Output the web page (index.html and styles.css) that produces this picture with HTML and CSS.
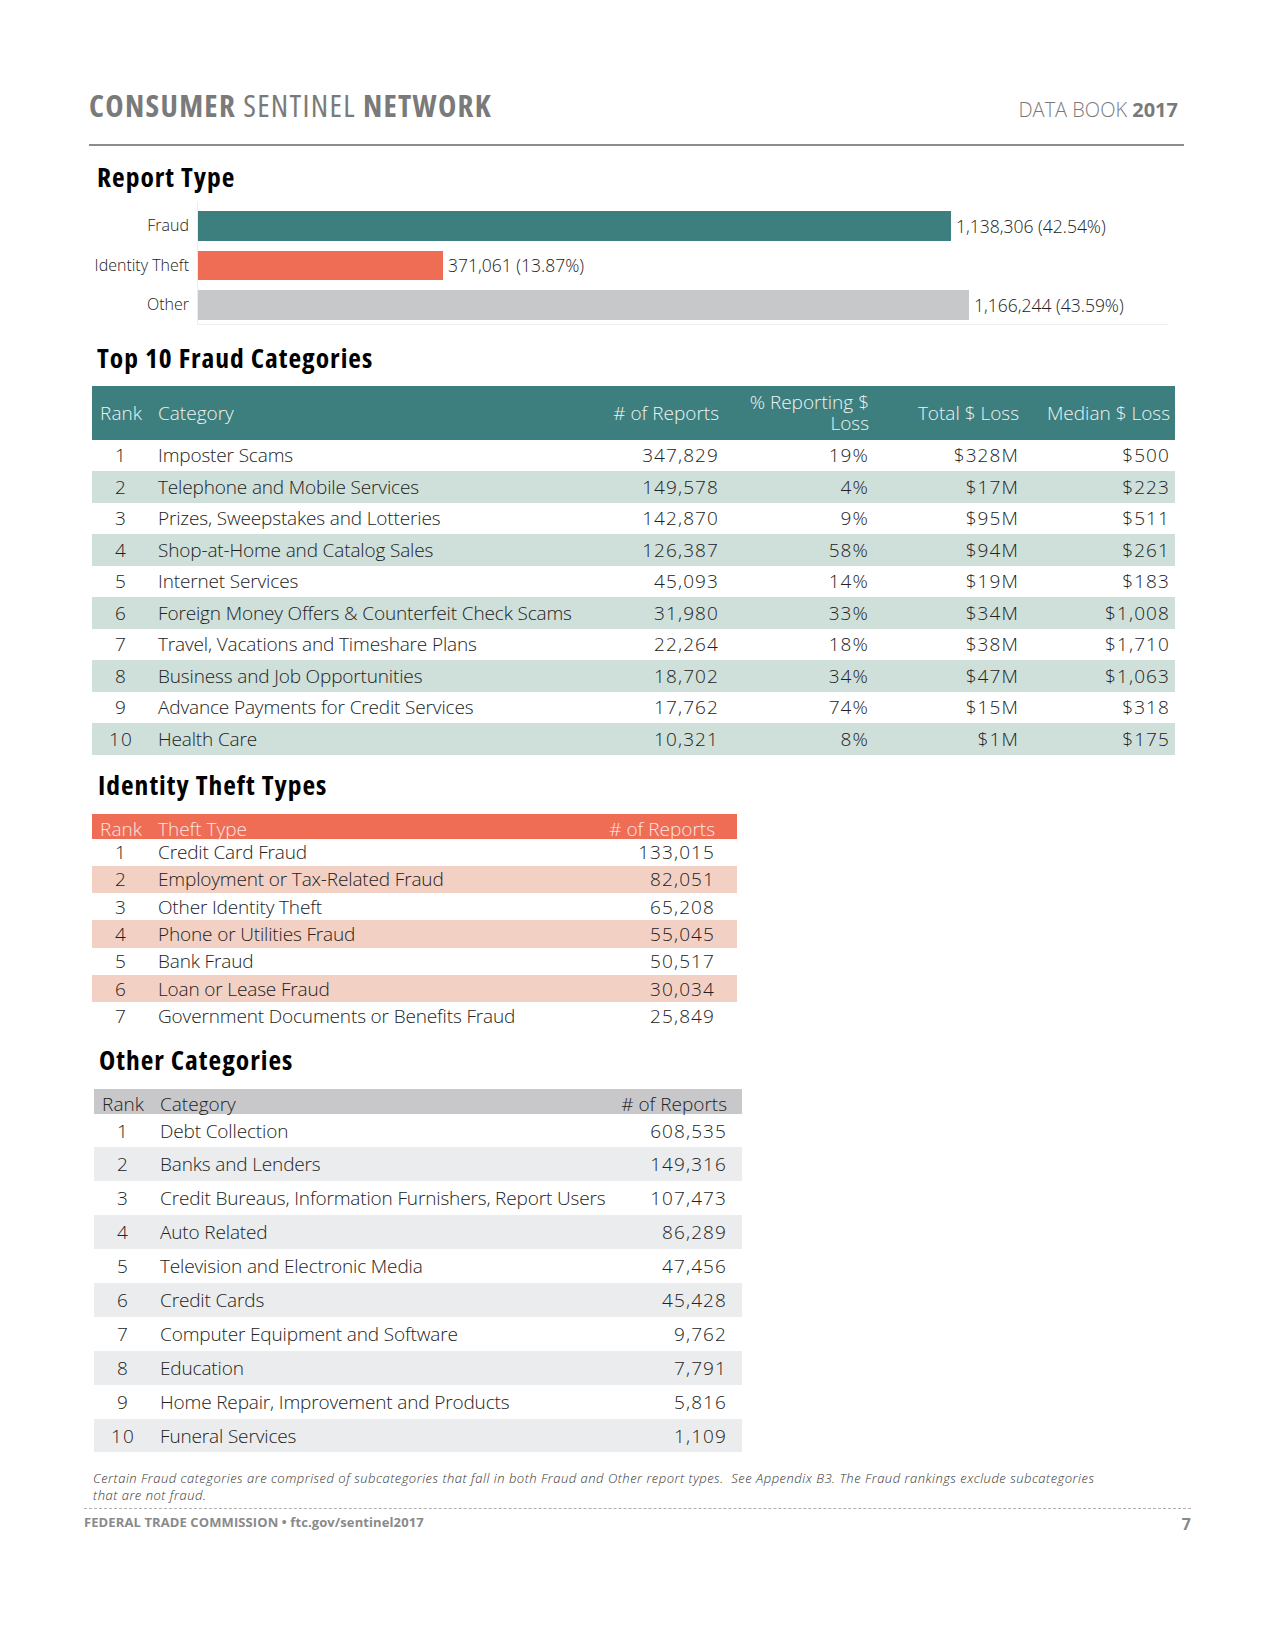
FILE: index.html
```html
<!DOCTYPE html>
<html>
<head>
<meta charset="utf-8">
<link rel="stylesheet" href="styles.css">
</head>
<body>
<div class="page">
  <header class="masthead">
    <div class="brand"><b>CONSUMER</b> SENTINEL <b>NETWORK</b></div>
    <div class="book">DATA BOOK <b>2017</b></div>
  </header>

  <section class="report-type">
    <h2 class="title t-report">Report Type</h2>
    <div class="chart">
      <div class="chart-labels">
        <div class="clabel">Fraud</div>
        <div class="clabel">Identity Theft</div>
        <div class="clabel">Other</div>
      </div>
      <div class="chart-plot">
        <div class="bar-row"><div class="bar bar-fraud" style="width:753px"></div><span class="bval">1,138,306 (42.54%)</span></div>
        <div class="bar-row"><div class="bar bar-id" style="width:245px"></div><span class="bval">371,061 (13.87%)</span></div>
        <div class="bar-row"><div class="bar bar-other" style="width:771px"></div><span class="bval">1,166,244 (43.59%)</span></div>
      </div>
    </div>
  </section>

  <h2 class="title t-fraud">Top 10 Fraud Categories</h2>
  <table class="tbl fraud">
    <colgroup><col class="c-rank"><col class="c-cat"><col class="c-num"><col class="c-num"><col class="c-num"><col class="c-last"></colgroup>
    <thead>
      <tr><th class="rank">Rank</th><th class="cat">Category</th><th class="num"># of Reports</th><th class="num"><span class="hl">% Reporting $</span><span class="hl">Loss</span></th><th class="num">Total $ Loss</th><th class="num">Median $ Loss</th></tr>
    </thead>
    <tbody>
      <tr><td class="rank">1</td><td class="cat">Imposter Scams</td><td class="num">347,829</td><td class="num">19%</td><td class="num">$328M</td><td class="num">$500</td></tr>
      <tr><td class="rank">2</td><td class="cat">Telephone and Mobile Services</td><td class="num">149,578</td><td class="num">4%</td><td class="num">$17M</td><td class="num">$223</td></tr>
      <tr><td class="rank">3</td><td class="cat">Prizes, Sweepstakes and Lotteries</td><td class="num">142,870</td><td class="num">9%</td><td class="num">$95M</td><td class="num">$511</td></tr>
      <tr><td class="rank">4</td><td class="cat">Shop-at-Home and Catalog Sales</td><td class="num">126,387</td><td class="num">58%</td><td class="num">$94M</td><td class="num">$261</td></tr>
      <tr><td class="rank">5</td><td class="cat">Internet Services</td><td class="num">45,093</td><td class="num">14%</td><td class="num">$19M</td><td class="num">$183</td></tr>
      <tr><td class="rank">6</td><td class="cat">Foreign Money Offers &amp; Counterfeit Check Scams</td><td class="num">31,980</td><td class="num">33%</td><td class="num">$34M</td><td class="num">$1,008</td></tr>
      <tr><td class="rank">7</td><td class="cat">Travel, Vacations and Timeshare Plans</td><td class="num">22,264</td><td class="num">18%</td><td class="num">$38M</td><td class="num">$1,710</td></tr>
      <tr><td class="rank">8</td><td class="cat">Business and Job Opportunities</td><td class="num">18,702</td><td class="num">34%</td><td class="num">$47M</td><td class="num">$1,063</td></tr>
      <tr><td class="rank">9</td><td class="cat">Advance Payments for Credit Services</td><td class="num">17,762</td><td class="num">74%</td><td class="num">$15M</td><td class="num">$318</td></tr>
      <tr><td class="rank">10</td><td class="cat">Health Care</td><td class="num">10,321</td><td class="num">8%</td><td class="num">$1M</td><td class="num">$175</td></tr>
    </tbody>
  </table>

  <h2 class="title t-id">Identity Theft Types</h2>
  <table class="tbl idt">
    <colgroup><col class="c-rank"><col class="c-cat"><col class="c-num"></colgroup>
    <thead>
      <tr><th class="rank">Rank</th><th class="cat">Theft Type</th><th class="num"># of Reports</th></tr>
    </thead>
    <tbody>
      <tr><td class="rank">1</td><td class="cat">Credit Card Fraud</td><td class="num">133,015</td></tr>
      <tr><td class="rank">2</td><td class="cat">Employment or Tax-Related Fraud</td><td class="num">82,051</td></tr>
      <tr><td class="rank">3</td><td class="cat">Other Identity Theft</td><td class="num">65,208</td></tr>
      <tr><td class="rank">4</td><td class="cat">Phone or Utilities Fraud</td><td class="num">55,045</td></tr>
      <tr><td class="rank">5</td><td class="cat">Bank Fraud</td><td class="num">50,517</td></tr>
      <tr><td class="rank">6</td><td class="cat">Loan or Lease Fraud</td><td class="num">30,034</td></tr>
      <tr><td class="rank">7</td><td class="cat">Government Documents or Benefits Fraud</td><td class="num">25,849</td></tr>
    </tbody>
  </table>

  <h2 class="title t-other">Other Categories</h2>
  <table class="tbl oth">
    <colgroup><col class="c-rank"><col class="c-cat"><col class="c-num"></colgroup>
    <thead>
      <tr><th class="rank">Rank</th><th class="cat">Category</th><th class="num"># of Reports</th></tr>
    </thead>
    <tbody>
      <tr><td class="rank">1</td><td class="cat">Debt Collection</td><td class="num">608,535</td></tr>
      <tr><td class="rank">2</td><td class="cat">Banks and Lenders</td><td class="num">149,316</td></tr>
      <tr><td class="rank">3</td><td class="cat">Credit Bureaus, Information Furnishers, Report Users</td><td class="num">107,473</td></tr>
      <tr><td class="rank">4</td><td class="cat">Auto Related</td><td class="num">86,289</td></tr>
      <tr><td class="rank">5</td><td class="cat">Television and Electronic Media</td><td class="num">47,456</td></tr>
      <tr><td class="rank">6</td><td class="cat">Credit Cards</td><td class="num">45,428</td></tr>
      <tr><td class="rank">7</td><td class="cat">Computer Equipment and Software</td><td class="num">9,762</td></tr>
      <tr><td class="rank">8</td><td class="cat">Education</td><td class="num">7,791</td></tr>
      <tr><td class="rank">9</td><td class="cat">Home Repair, Improvement and Products</td><td class="num">5,816</td></tr>
      <tr><td class="rank">10</td><td class="cat">Funeral Services</td><td class="num">1,109</td></tr>
    </tbody>
  </table>

  <p class="note">Certain Fraud categories are comprised of subcategories that fall in both Fraud and Other report types.&nbsp; See Appendix B3. The Fraud rankings exclude subcategories that are not fraud.</p>

  <footer class="foot">
    <span>FEDERAL TRADE COMMISSION • ftc.gov/sentinel2017</span>
    <span class="pno">7</span>
  </footer>
</div>
</body>
</html>
```

FILE: styles.css
```css
* { box-sizing: border-box; }
html, body { margin: 0; padding: 0; background: #fff; }
body {
  font-family: "Open Sans", "DejaVu Sans Condensed", sans-serif;
  font-stretch: 100%;
  font-weight: 300;
  color: #222;
}
.page {
  width: 1275px;
  padding: 86px 0 0 0;
}

/* masthead */
.masthead {
  margin: 0 91px 0 89px;
  display: flex;
  justify-content: space-between;
  align-items: baseline;
  border-bottom: 2px solid #8c8c8c;
  padding-bottom: 20px;
  color: #7a7a7a;
}
.brand { font-size: 31px; line-height: 38px; font-weight: 400; font-stretch: 75%; letter-spacing: 1.3px; }
.brand b { font-weight: 700; }
.book { font-size: 20px; margin-right: 6px; font-weight: 300; letter-spacing: 0; }
.book b { font-weight: 700; }

.title {
  font-weight: 700;
  font-size: 27.5px;
  font-stretch: 75%;
  letter-spacing: 1px;
  color: #000;
  margin: 0;
  line-height: 30px;
}
.t-report { margin: 16px 0 0 97px; }
.t-fraud { margin: 18px 0 0 97px; }
.t-id { margin: 15px 0 0 98px; }
.t-other { margin: 15px 0 0 99px; }

/* chart */
.chart {
  display: flex;
  margin: 10px 0 0 0;
}
.chart-labels {
  width: 197px;
  padding: 9px 8px 0 0;
  display: flex;
  flex-direction: column;
  gap: 10px;
}
.clabel {
  height: 29.5px;
  line-height: 29.5px;
  text-align: right;
  font-size: 16px;
  letter-spacing: 0;
  color: #222;
}
.chart-plot {
  width: 971px;
  border-left: 1px solid #eeeeee;
  border-bottom: 1px solid #eeeeee;
  padding: 9px 0 4px 0;
  display: flex;
  flex-direction: column;
  gap: 10px;
}
.bar-row {
  display: flex;
  align-items: center;
  height: 29.5px;
}
.bar { height: 100%; flex: none; }
.bar-fraud { background: #3d7f7e; }
.bar-id { background: #ef6c55; }
.bar-other { background: #c7c8ca; }
.bval { font-size: 17.5px; letter-spacing: 0; margin-left: 5px; color: #222; white-space: nowrap; }

/* tables */
.tbl {
  border-collapse: collapse;
  table-layout: fixed;
  font-size: 19px;
  color: #222;
  letter-spacing: -0.15px;
}
.tbl th { font-weight: 300; letter-spacing: 0; }
.tbl td, .tbl th { padding: 0; white-space: nowrap; }
.tbl .rank { text-align: center; }
.tbl .cat { text-align: left; padding-left: 8px; }
.tbl .num { text-align: right; }
.tbl td.num, .tbl td.rank { letter-spacing: 1.1px; }
.hl { display: block; line-height: 21px; }

.fraud { margin: 13px 0 0 92px; width: 1083px; }
.fraud .c-rank { width: 58px; }
.fraud .c-cat { width: 424px; }
.fraud .c-num { width: 150px; }
.fraud .c-last { width: 151px; }
.fraud thead tr { background: #3d7f7e; height: 54px; }
.fraud th { color: #eef4f3; line-height: 22px; vertical-align: middle; }
.fraud .num { padding-right: 5px; }
.fraud tbody tr { height: 31.5px; }
.fraud tbody tr:nth-child(even) { background: #cfdfda; }

.idt { margin: 14px 0 0 92px; width: 645px; }
.idt .c-rank { width: 58px; }
.idt .c-cat { width: 437px; }
.idt .c-num { width: 150px; }
.idt thead tr { background: #ef6c55; height: 25px; }
.idt th { color: #fbe6e0; line-height: 20px; vertical-align: bottom; padding-bottom: 0; }
.idt .num { padding-right: 22px; }
.idt tbody tr { height: 27.3px; }
.idt tbody tr:nth-child(even) { background: #f2d0c4; }

.oth { margin: 14px 0 0 94px; width: 648px; }
.oth .c-rank { width: 58px; }
.oth .c-cat { width: 440px; }
.oth .c-num { width: 150px; }
.oth thead tr { background: #c8c8ca; height: 25px; }
.oth th { color: #222; line-height: 20px; vertical-align: bottom; }
.oth .num { padding-right: 15px; }
.oth tbody tr { height: 33.9px; }
.oth tbody tr:nth-child(even) { background: #ebecee; }

.note {
  margin: 18px 0 0 93px;
  width: 1010px;
  font-size: 13px;
  font-style: italic;
  line-height: 17px;
  color: #333;
  letter-spacing: 0.5px;
}
.foot {
  margin: 4px 84px 0 84px;
  border-top: 1px dashed #b0b0b0;
  padding-top: 4px;
  display: flex;
  justify-content: space-between;
  font-size: 13px;
  font-weight: 700;
  letter-spacing: 0.1px;
  color: #8a8a8a;
}
.pno { font-size: 16px; color: #888; }
```
